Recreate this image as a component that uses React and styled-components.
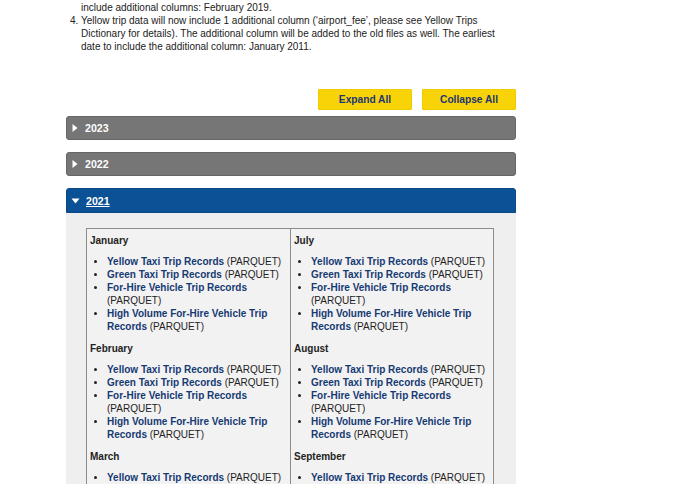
import React from "react";
import styled, { createGlobalStyle } from "styled-components";

const Global = createGlobalStyle`
  html, body { margin: 0; padding: 0; background: #fff; }
  body { font-family: "Liberation Sans", Arial, Helvetica, sans-serif; color: #222; }
`;

const Page = styled.div`
  padding-left: 66px;
  width: 450px;
`;

const Notes = styled.ol`
  margin: -12px 0 36px 0;
  padding-left: 15px;
  font-size: 10px;
  line-height: 13px;
  color: #222;
  width: 425px;
`;

const Note = styled.li``;

const ButtonRow = styled.div`
  display: flex;
  justify-content: flex-end;
  gap: 10px;
  margin-bottom: 6px;
`;

const ToggleButton = styled.button`
  height: 21px;
  min-width: 94px;
  padding: 0 16px;
  border: 1px solid #f0cc00;
  border-radius: 1px;
  background: #f8d308;
  color: #1d3572;
  font-family: "Liberation Sans", Arial, sans-serif;
  font-weight: bold;
  font-size: 10.2px;
  cursor: pointer;
`;

const Accordion = styled.div`
  display: flex;
  flex-direction: column;
  gap: 12px;
`;

const Item = styled.div``;

const Header = styled.div`
  display: flex;
  align-items: center;
  gap: 6px;
  height: ${(p) => (p.$open ? 25 : 24)}px;
  box-sizing: border-box;
  padding-left: 4px;
  background: ${(p) => (p.$open ? "#0b5196" : "#767676")};
  border: 1px solid ${(p) => (p.$open ? "#0a4886" : "#666")};
  border-radius: ${(p) => (p.$open ? "3px 3px 0 0" : "3px")};
  color: #fff;
  font-weight: bold;
  font-size: 10.6px;
`;

const Year = styled.span`
  text-decoration: ${(p) => (p.$open ? "underline" : "none")};
`;

const Arrow = ({ open }) =>
  open ? (
    <svg width="9" height="8" viewBox="0 0 9 8">
      <path d="M0.5 1.5 L8.5 1.5 L4.5 6.5 Z" fill="#fff" />
    </svg>
  ) : (
    <svg width="8" height="10" viewBox="0 0 8 10">
      <path d="M1.5 1 L6.5 5 L1.5 9 Z" fill="#fff" />
    </svg>
  );

const Panel = styled.div`
  background: #efefef;
  padding: 15px 20px 0 20px;
  height: 300px;
`;

const Table = styled.div`
  width: 408px;
  box-sizing: border-box;
  display: grid;
  grid-template-columns: 1fr 1fr;
  border: 1px solid #8c8c8c;
  background: #f2f2f2;
`;

const Column = styled.div`
  padding: 5px 3px 0 3px;
  border-left: ${(p) => (p.$first ? "none" : "1px solid #8c8c8c")};
  font-size: 10px;
  line-height: 13px;
`;

const Month = styled.div`
  font-weight: bold;
  color: #222;
`;

const Files = styled.ul`
  margin: 8px 0 9px 0;
  padding-left: 17px;
`;

const File = styled.li``;

const Link = styled.a`
  color: #163a72;
  font-weight: bold;
  text-decoration: none;
`;

const records = [
  "Yellow Taxi Trip Records",
  "Green Taxi Trip Records",
  "For-Hire Vehicle Trip Records",
  "High Volume For-Hire Vehicle Trip Records",
];

const MonthBlock = ({ name }) => (
  <>
    <Month>{name}</Month>
    <Files>
      {records.map((r) => (
        <File key={r}>
          <Link href="#">{r}</Link> (PARQUET)
        </File>
      ))}
    </Files>
  </>
);

export default function App() {
  return (
    <>
      <Global />
      <Page>
        <Notes start={3}>
          <Note>
            The HVFHV trip data will now include additional columns. The earliest date to
            <br />
            include additional columns: February 2019.
          </Note>
          <Note>
            Yellow trip data will now include 1 additional column (‘airport_fee’, please see Yellow Trips
            Dictionary for details). The additional column will be added to the old files as well. The earliest
            date to include the additional column: January 2011.
          </Note>
        </Notes>
        <ButtonRow>
          <ToggleButton>Expand All</ToggleButton>
          <ToggleButton>Collapse All</ToggleButton>
        </ButtonRow>
        <Accordion>
          <Item>
            <Header>
              <Arrow />
              <Year>2023</Year>
            </Header>
          </Item>
          <Item>
            <Header>
              <Arrow />
              <Year>2022</Year>
            </Header>
          </Item>
          <Item>
            <Header $open>
              <Arrow open />
              <Year $open>2021</Year>
            </Header>
            <Panel>
              <Table>
                <Column $first>
                  <MonthBlock name="January" />
                  <MonthBlock name="February" />
                  <MonthBlock name="March" />
                </Column>
                <Column>
                  <MonthBlock name="July" />
                  <MonthBlock name="August" />
                  <MonthBlock name="September" />
                </Column>
              </Table>
            </Panel>
          </Item>
        </Accordion>
      </Page>
    </>
  );
}
